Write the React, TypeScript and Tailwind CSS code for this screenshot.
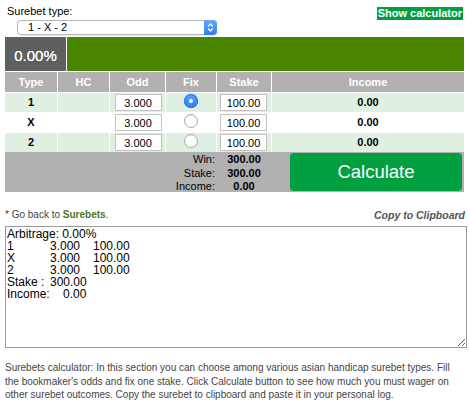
import React from 'react';

const rows = [
  { type: '1', odd: '3.000', stake: '100.00', fixed: true, shade: true },
  { type: 'X', odd: '3.000', stake: '100.00', fixed: false, shade: false },
  { type: '2', odd: '3.000', stake: '100.00', fixed: false, shade: true },
];

const cols = 'grid grid-cols-[52px_51px_55px_50px_54px_1fr] gap-x-px';

const log =
  'Arbitrage: 0.00%\n1\t3.000\t100.00\nX\t3.000\t100.00\n2\t3.000\t100.00\nStake :\t300.00\nIncome:    0.00';

const Radio: React.FC<{ checked: boolean }> = ({ checked }) =>
  checked ? (
    <span className="mt-[1px] flex h-[14px] w-[14px] items-center justify-center rounded-full bg-gradient-to-b from-[#5aa2fb] to-[#2f7ff2] shadow-[inset_0_0_0_1px_#2a74e0]">
      <span className="h-[4px] w-[4px] rounded-full bg-white" />
    </span>
  ) : (
    <span className="mt-[1px] h-[14px] w-[14px] rounded-full border border-[#aaa] bg-white shadow-[inset_0_1px_1px_rgba(0,0,0,0.08)]" />
  );

const App: React.FC = () => {
  return (
    <div className="h-[410px] w-[469px] overflow-hidden bg-white font-['Liberation_Sans',Arial,sans-serif] text-black">
      {/* top controls */}
      <div className="flex justify-between pl-[7px] pr-[6px] pt-[5px]">
        <div>
          <div className="text-[11px] leading-[13px]">Surebet type:</div>
          <div className="ml-[10px] mt-[2px] flex h-[15px] w-[200px] items-center justify-between rounded-[4px] border border-[#b5b5b5] bg-white shadow-[0_1px_1px_rgba(0,0,0,0.08)]">
            <span className="pl-[10px] text-[11px] leading-[13px]">1 - X - 2</span>
            <span className="-mr-px flex h-[15px] w-[13px] flex-col items-center justify-center rounded-r-[4px] bg-gradient-to-b from-[#65a8fb] to-[#2d7ef2]">
              <svg width="7" height="11" viewBox="0 0 7 11" fill="none" stroke="white" strokeWidth="1.3" strokeLinecap="round" strokeLinejoin="round">
                <path d="M1.5 4L3.5 2L5.5 4" />
                <path d="M1.5 7L3.5 9L5.5 7" />
              </svg>
            </span>
          </div>
        </div>
        <div className="mt-[2px] self-start bg-[#00a040] px-px text-[11px] font-bold leading-[13px] text-white">
          Show calculator
        </div>
      </div>

      {/* calculator table */}
      <div className="mx-[5px] mt-[2px] w-[459px]">
        <div className="flex h-[35px] border-b border-white">
          <div className="flex w-[61px] items-center justify-center bg-[#5f5f5f] pt-[4px] text-[15px] text-white [text-shadow:0_0_0.4px_white]">
            0.00%
          </div>
          <div className="w-px bg-white" />
          <div className="flex-1 bg-[#4a8500]" />
        </div>

        <div className={`${cols} h-[20px] bg-white text-[11px] font-bold text-white`}>
          {['Type', 'HC', 'Odd', 'Fix', 'Stake', 'Income'].map((h) => (
            <div key={h} className="flex items-center justify-center bg-[#b1b1b1]">
              {h}
            </div>
          ))}
        </div>

        <div className="flex flex-col gap-y-px bg-white pt-px">
          {rows.map((r) => {
            const bg = r.shade ? 'bg-[#dff0e3]' : 'bg-white';
            return (
              <div key={r.type} className={`${cols} h-[19px] text-[11px] leading-[13px]`}>
                <div className={`${bg} pt-[3px] text-center font-bold`}>{r.type}</div>
                <div className={bg} />
                <div className={`${bg} flex justify-center pt-px`}>
                  <input
                    readOnly
                    value={r.odd}
                    className="ml-[1px] h-[17px] w-[47px] border border-[#c2c2c2] bg-white text-center text-[11px] outline-none"
                  />
                </div>
                <div className={`${bg} flex justify-center`}>
                  <Radio checked={r.fixed} />
                </div>
                <div className={`${bg} flex justify-center pt-px`}>
                  <input
                    readOnly
                    value={r.stake}
                    className="mr-[1px] h-[17px] w-[47px] border border-[#c2c2c2] bg-white text-center text-[11px] outline-none"
                  />
                </div>
                <div className={`${bg} pt-[3px] text-center font-bold`}>0.00</div>
              </div>
            );
          })}
        </div>

        {/* totals + calculate */}
        <div className="flex h-[40px] bg-[#b1b1b1] text-[11px] leading-[13.5px]">
          <div className="w-[211px] pr-[1px] pt-px text-right">
            <div>Win:</div>
            <div>Stake:</div>
            <div>Income:</div>
          </div>
          <div className="w-[56px] pt-px text-center font-bold">
            <div>300.00</div>
            <div>300.00</div>
            <div>0.00</div>
          </div>
          <div className="flex-1 pb-px pl-[18px] pr-[2px] pt-px">
            <button className="flex h-[38px] w-full items-center justify-center rounded-[4px] bg-[#00a040] text-[18.5px] text-white">
              Calculate
            </button>
          </div>
        </div>
      </div>

      <div className="mx-[5px] mt-[17px] flex items-center justify-between text-[10px] leading-[12px]">
        <span className="text-[#444]">
          * Go back to <span className="font-bold text-[#4a7a1e]">Surebets</span>.
        </span>
        <span className="-mr-px text-[10.5px] font-bold italic text-[#555]">Copy to Clipboard</span>
      </div>

      <textarea
        readOnly
        value={log}
        className="mx-[5px] mt-[5px] block h-[122px] w-[462px] border border-[#9a9a9a] px-px pt-px text-[12px] leading-[12px] text-black outline-none [tab-size:43px]"
      />

      <p className="mx-[5px] mt-[13px] w-[445px] text-[10px] leading-[13.5px] text-[#444]">
        Surebets calculator: In this section you can choose among various asian handicap surebet types. Fill
        the bookmaker's odds and fix one stake. Click Calculate button to see how much you must wager on other
        surebet outcomes. Copy the surebet to clipboard and paste it in your personal log.
      </p>
    </div>
  );
};

export default App;
